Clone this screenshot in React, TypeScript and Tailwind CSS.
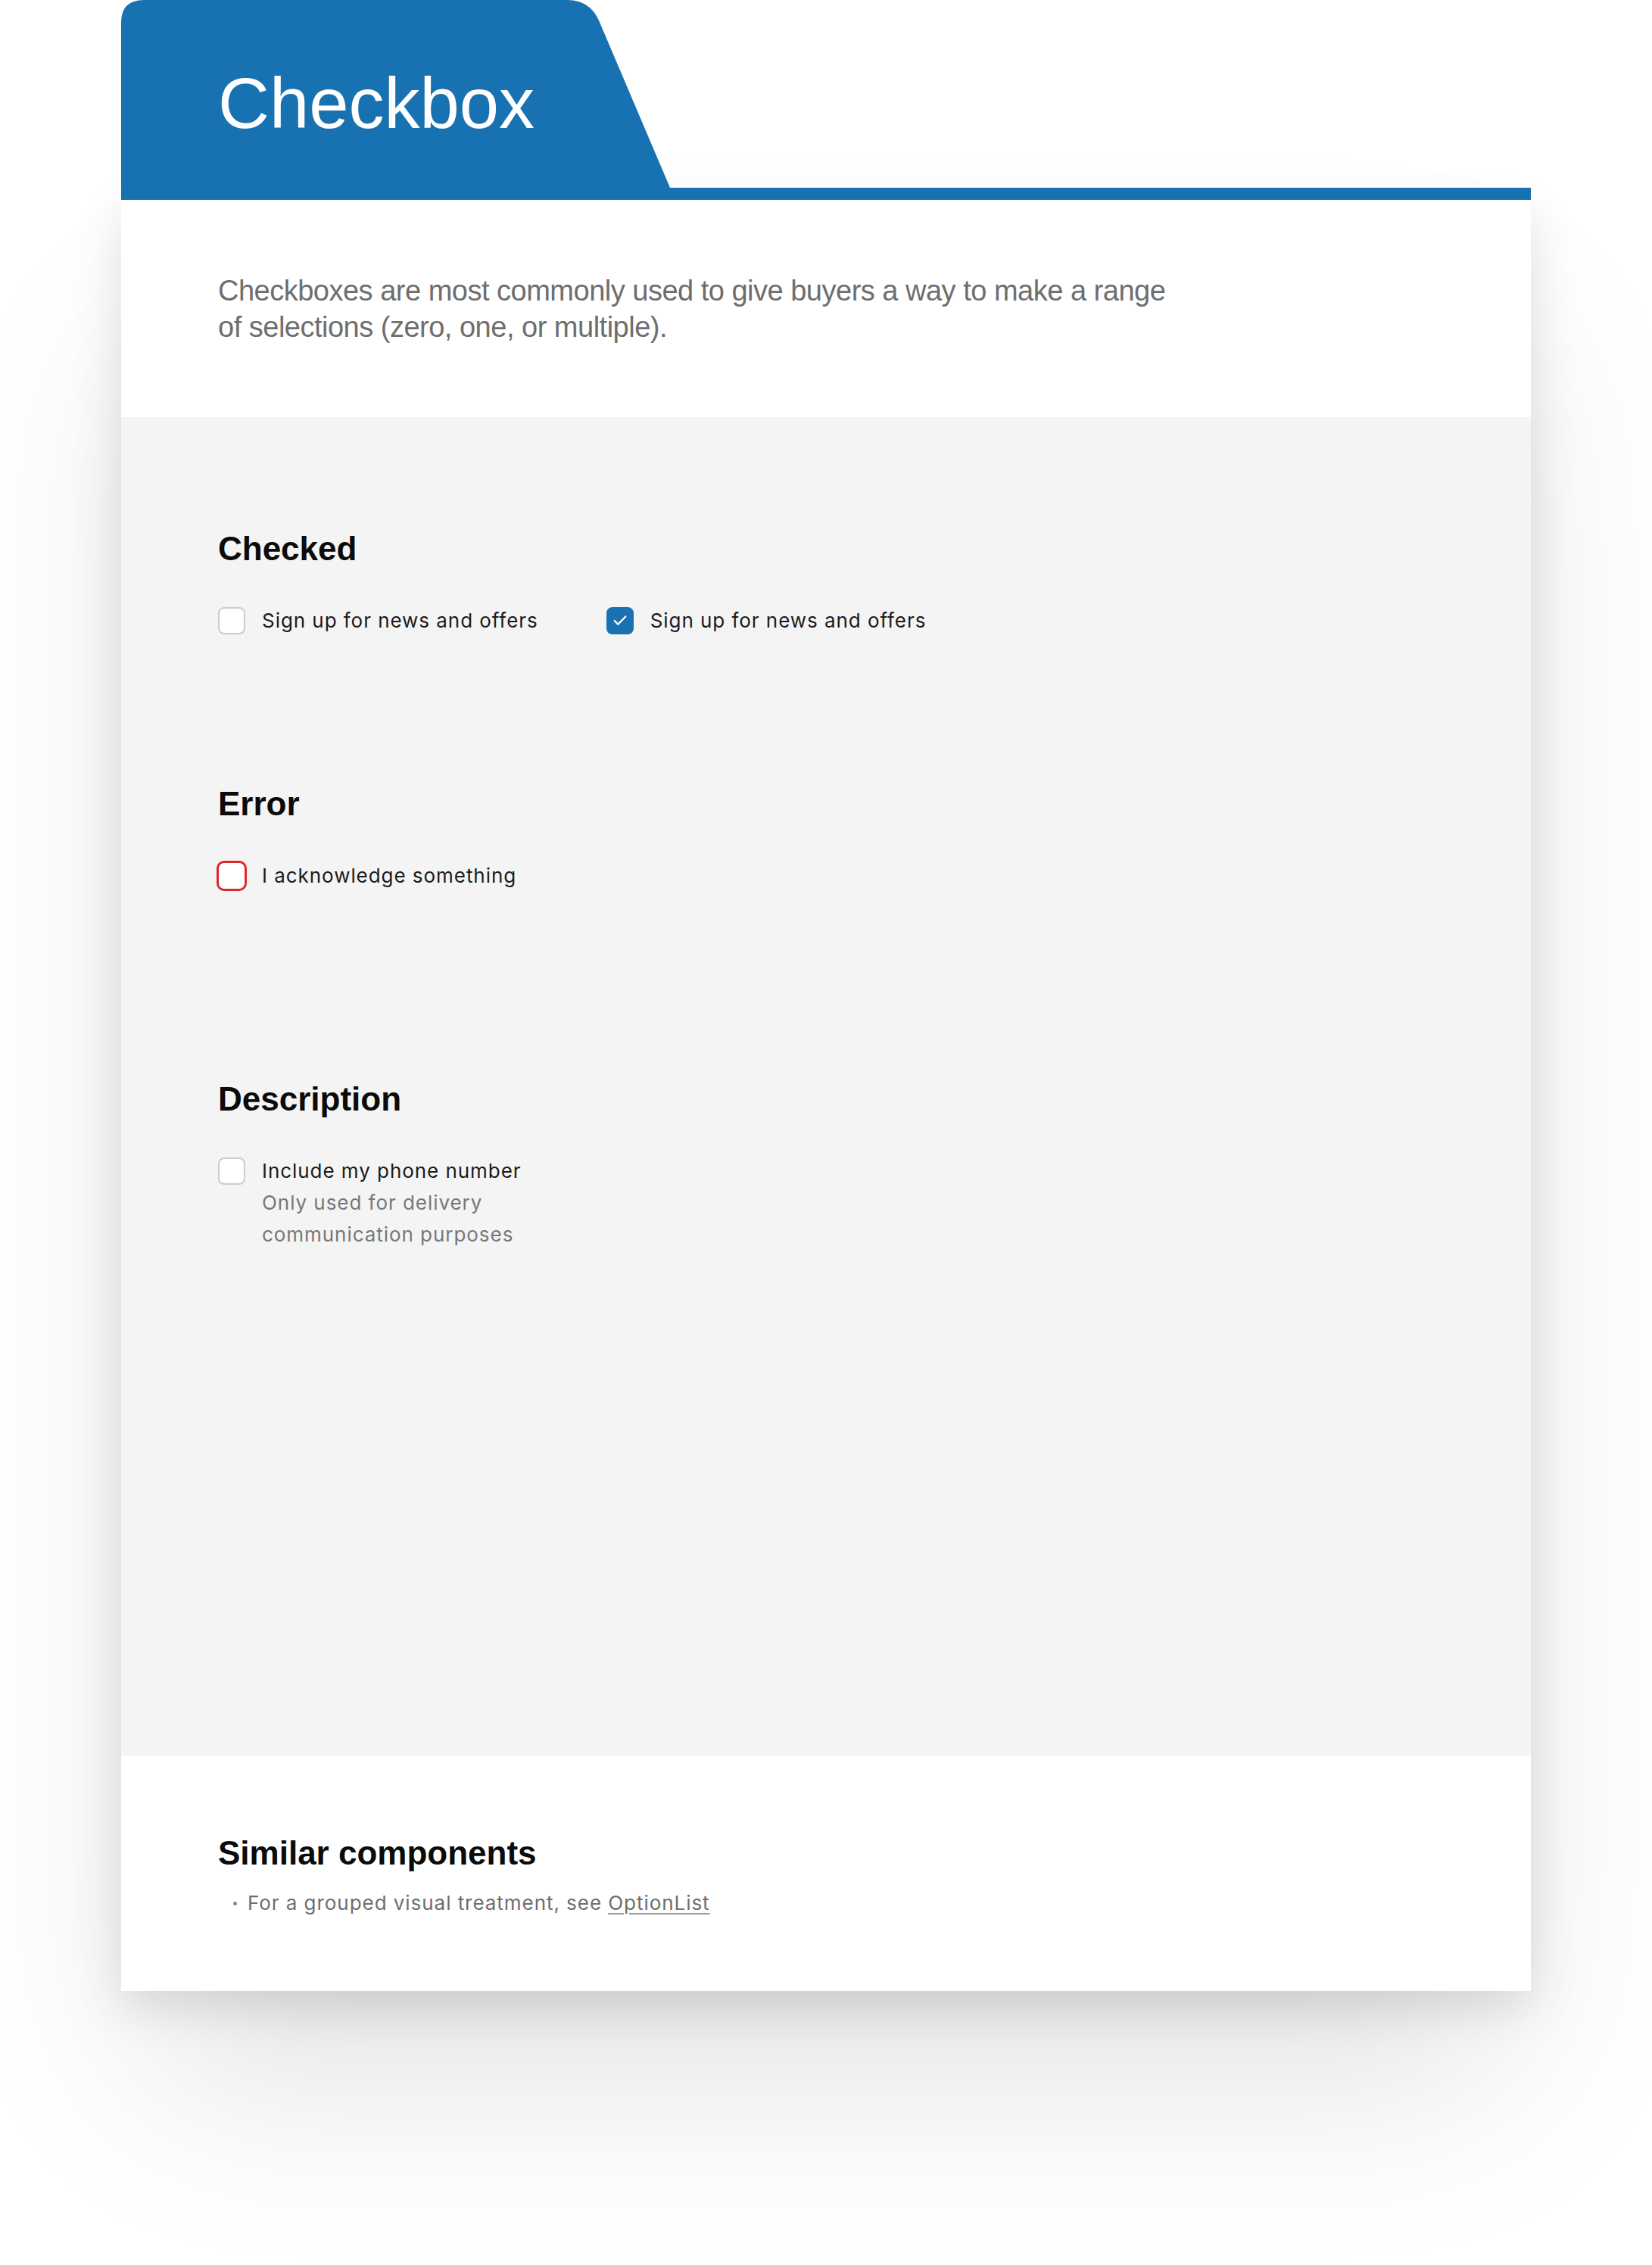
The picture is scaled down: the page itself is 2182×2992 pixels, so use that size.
import { Check } from 'lucide-react'

const sans = "font-['Liberation_Sans',Arial,sans-serif]"
const ui = "font-['Inter','Noto_Sans',sans-serif] tracking-[0.95px]"

function Box({ checked, error }: { checked?: boolean; error?: boolean }) {
  if (error) {
    return <span className="block w-[40px] h-[40px] shrink-0 rounded-[10px] border-[3px] border-[#e0262a] bg-white" />
  }
  if (checked) {
    return (
      <span className="w-[36px] h-[36px] shrink-0 rounded-[8px] bg-[#1a72b1] flex items-center justify-center">
        <Check size={22} strokeWidth={2.5} className="text-white" />
      </span>
    )
  }
  return <span className="block w-[36px] h-[36px] shrink-0 rounded-[8px] border-2 border-[#cccccc] bg-white" />
}

function Heading({ children }: { children: React.ReactNode }) {
  return <h2 className={`${sans} text-[44px] leading-none font-bold text-[#0b0b0b]`}>{children}</h2>
}

export default function App() {
  return (
    <div className="min-h-screen bg-white pb-[362px]">
      <div className="ml-[160px] w-[1862px]">

        {/* Tab header */}
        <div className="relative h-[264px]">
          <svg className="absolute inset-0" width="1862" height="264" viewBox="0 0 1862 264">
            <path d="M0 264 V30 Q0 0 30 0 H589.5 Q619.5 0 631.2 27.6 L725 248 H1862 V264 Z" fill="#1872b1" />
          </svg>
          <h1 className={`${sans} relative pl-[128px] pt-[90px] text-[94px] leading-none text-white`}>Checkbox</h1>
        </div>

        <div className="shadow-[0_20px_60px_rgba(0,0,0,0.12),0_150px_300px_-40px_rgba(0,0,0,0.12)]">

          {/* Intro */}
          <div className="bg-white px-[128px] pt-[96px] pb-[95px]">
            <p className={`${sans} max-w-[1280px] text-[38px] leading-[48px] tracking-[-0.5px] text-[#6e6e6e]`}>
              Checkboxes are most commonly used to give buyers a way to make a range of selections (zero, one, or multiple).
            </p>
          </div>

          {/* Examples */}
          <div className="bg-[#f4f4f4] h-[1768px] px-[128px] pt-[152px]">
            <Heading>Checked</Heading>
            <div className={`${ui} mt-[55px] flex items-center gap-[90px]`}>
              <label className="flex items-center gap-[22px]">
                <Box />
                <span className="text-[26px] leading-[36px] text-[#1a1a1a]">Sign up for news and offers</span>
              </label>
              <label className="flex items-center gap-[22px]">
                <Box checked />
                <span className="text-[26px] leading-[36px] text-[#1a1a1a]">Sign up for news and offers</span>
              </label>
            </div>

            <div className="mt-[202px]">
              <Heading>Error</Heading>
            </div>
            <label className={`${ui} mt-[53px] -ml-[2px] flex items-center gap-[20px]`}>
              <Box error />
              <span className="text-[26px] leading-[36px] text-[#1a1a1a]">I acknowledge something</span>
            </label>

            <div className="mt-[253px]">
              <Heading>Description</Heading>
            </div>
            <label className={`${ui} mt-[52px] flex items-start gap-[22px]`}>
              <span className="block mt-[3px]"><Box /></span>
              <span className="block max-w-[380px] text-[26px] leading-[42px]">
                <span className="block text-[#1a1a1a]">Include my phone number</span>
                <span className="block text-[#777777]">Only used for delivery communication purposes</span>
              </span>
            </label>
          </div>

          {/* Similar components */}
          <div className="bg-white h-[311px] px-[128px] pt-[107px]">
            <Heading>Similar components</Heading>
            <ul className={`${ui} mt-[26px] pl-[20px]`}>
              <li className="flex items-center gap-[14px] text-[26px] leading-[36px] text-[#6e6e6e]">
                <span className="w-[5px] h-[5px] rounded-full bg-[#8a8a8a]" />
                <span>
                  For a grouped visual treatment, see <a className="underline underline-offset-4 decoration-[#9a9a9a]">OptionList</a>
                </span>
              </li>
            </ul>
          </div>

        </div>
      </div>
    </div>
  )
}
